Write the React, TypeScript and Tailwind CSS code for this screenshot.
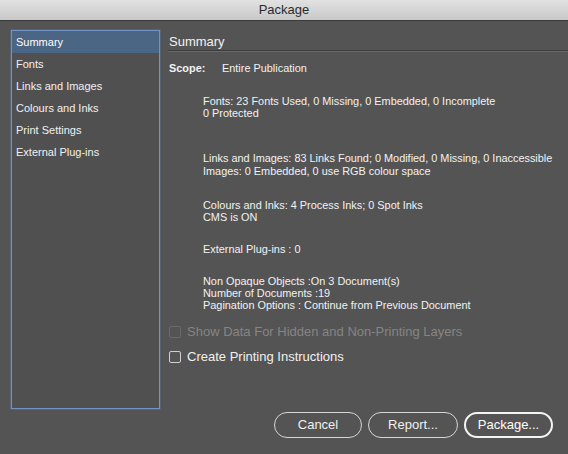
import React from 'react';

const sections = ['Summary', 'Fonts', 'Links and Images', 'Colours and Inks', 'Print Settings', 'External Plug-ins'];

function Checkbox({ label, disabled }: { label: string; disabled?: boolean }) {
  return (
    <div className="flex items-center h-[16px]">
      <span
        className={
          disabled
            ? 'ml-[1px] w-[12px] h-[12px] rounded-[2px] border border-[#6b6b6b]'
            : 'ml-[1px] w-[12px] h-[12px] rounded-[2px] border border-[#d0d0d0]'
        }
      />
      <span className={disabled ? 'ml-[6px] text-[13px] text-[#858585]' : 'ml-[6px] text-[13px] text-[#f0f0f0]'}>
        {label}
      </span>
    </div>
  );
}

export default function App() {
  return (
    <div
      className="w-[568px] h-[454px] bg-[#545454] flex flex-col overflow-hidden text-[#f2f2f2]"
      style={{ fontFamily: '"Liberation Sans", Arial, sans-serif' }}
    >
      {/* Title bar */}
      <div className="h-[21px] shrink-0 bg-gradient-to-b from-[#e2e2e2] to-[#c8c8c8] border-b border-[#3a3a3a] text-center text-[13px] leading-[20px] text-[#2b2b2b]">
        Package
      </div>

      <div className="flex mt-[9px] h-[379px]">
        {/* Section list */}
        <div className="ml-[11px] w-[149px] h-full border border-[#7393c6] shadow-[0_0_0_1px_rgba(90,125,180,0.35)] bg-[#505050]">
          {sections.map((s, i) => (
            <div
              key={s}
              className={
                i === 0
                  ? 'h-[22px] pl-[4px] flex items-center text-[11px] text-white bg-[#4b6584]'
                  : 'h-[22px] pl-[4px] flex items-center text-[11px] text-[#f0f0f0]'
              }
            >
              {s}
            </div>
          ))}
        </div>

        {/* Summary panel */}
        <div className="ml-[8px] flex-1 flex flex-col">
          <div className="pt-[5px] pb-[1px] pl-[1px] text-[13px] leading-[14px] border-b border-[#3e3e3e] shadow-[0_1px_0_#686868]">
            Summary
          </div>

          <div className="mt-[11px] pl-[1px] flex text-[10.9px] leading-[12px]">
            <span className="font-bold w-[53px]">Scope:</span>
            <span>Entire Publication</span>
          </div>

          <div className="pl-[35px] text-[10.9px] leading-[12px]">
            <div className="mt-[21px]">
              <div>Fonts: 23 Fonts Used, 0 Missing, 0 Embedded, 0 Incomplete</div>
              <div>0 Protected</div>
            </div>
            <div className="mt-[33px]">
              <div>Links and Images: 83 Links Found; 0 Modified, 0 Missing, 0 Inaccessible</div>
              <div className="mt-[1px]">Images: 0 Embedded, 0 use RGB colour space</div>
            </div>
            <div className="mt-[22px]">
              <div>Colours and Inks: 4 Process Inks; 0 Spot Inks</div>
              <div>CMS is ON</div>
            </div>
            <div className="mt-[20px]">External Plug-ins : 0</div>
            <div className="mt-[20px]">
              <div>Non Opaque Objects :On 3 Document(s)</div>
              <div>Number of Documents :19</div>
              <div>Pagination Options : Continue from Previous Document</div>
            </div>
          </div>

          <div className="mt-[13px]">
            <Checkbox label="Show Data For Hidden and Non-Printing Layers" disabled />
          </div>
          <div className="mt-[9px]">
            <Checkbox label="Create Printing Instructions" />
          </div>
        </div>
      </div>

      {/* Buttons */}
      <div className="mt-[3px] flex justify-end gap-[6px] pr-[15px]">
        <button className="w-[88px] h-[26px] rounded-full border border-[#d6d6d6] text-[13px] text-[#f0f0f0]">
          Cancel
        </button>
        <button className="w-[90px] h-[26px] rounded-full border border-[#d6d6d6] text-[13px] text-[#f0f0f0]">
          Report...
        </button>
        <button className="w-[89px] h-[26px] rounded-full border-2 border-[#f4f4f4] text-[13px] text-white">
          Package...
        </button>
      </div>
    </div>
  );
}
